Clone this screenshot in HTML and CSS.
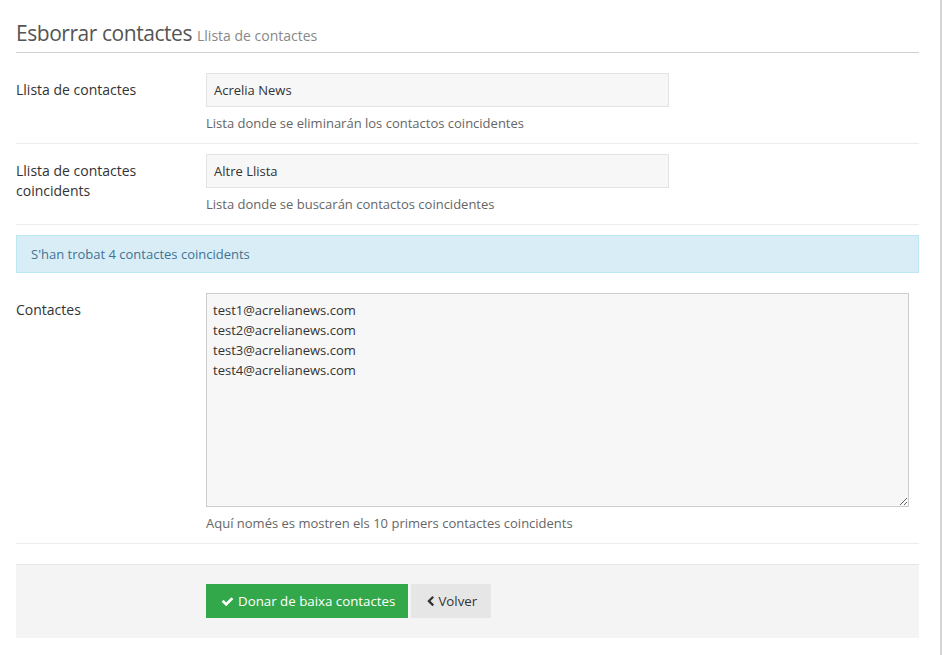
FILE: index.html
```html
<!DOCTYPE html>
<html lang="ca">
<head>
<meta charset="utf-8">
<title>Esborrar contactes</title>
<link rel="stylesheet" href="styles.css">
</head>
<body>
<div class="frame">
  <h1 class="page-title">Esborrar contactes <small>Llista de contactes</small></h1>
  <form class="form">
    <div class="row row-first">
      <label class="label">Llista de contactes</label>
      <div class="field">
        <div class="input input-half">Acrelia News</div>
        <p class="help">Lista donde se eliminarán los contactos coincidentes</p>
      </div>
    </div>
    <div class="row">
      <label class="label">Llista de contactes coincidents</label>
      <div class="field">
        <div class="input input-half">Altre Llista</div>
        <p class="help">Lista donde se buscarán contactos coincidentes</p>
      </div>
    </div>
    <div class="alert">S'han trobat 4 contactes coincidents</div>
    <div class="row">
      <label class="label">Contactes</label>
      <div class="field">
        <textarea class="textarea" readonly>test1@acrelianews.com
test2@acrelianews.com
test3@acrelianews.com
test4@acrelianews.com</textarea>
        <p class="help">Aquí només es mostren els 10 primers contactes coincidents</p>
      </div>
    </div>
    <div class="actions">
      <button type="button" class="btn btn-success"><svg class="ico" viewBox="0 0 1792 1792"><path fill="currentColor" d="M1671 566q0 40-28 68l-724 724-136 136q-28 28-68 28t-68-28l-136-136-362-362q-28-28-28-68t28-68l136-136q28-28 68-28t68 28l294 295 656-657q28-28 68-28t68 28l136 136q28 28 28 68z"/></svg>Donar de baixa contactes</button>
      <button type="button" class="btn btn-default"><svg class="ico ico-chev" viewBox="0 0 1792 1792"><path fill="currentColor" d="M1427 301l-531 531 531 531q19 19 19 45t-19 45l-166 166q-19 19-45 19t-45-19l-742-742q-19-19-19-45t19-45l742-742q19-19 45-19t45 19l166 166q19 19 19 45t-19 45z"/></svg>Volver</button>
    </div>
  </form>
</div>
</body>
</html>
```

FILE: styles.css
```css
* { box-sizing: border-box; }
html, body { margin: 0; padding: 0; background: #fff; }
body {
  font-family: "Open Sans", "Liberation Sans", sans-serif;
  font-size: 14px;
  color: #333;
}
.frame {
  width: 942px;
  min-height: 655px;
  padding: 0 21px 0 16px;
  border-right: 2px solid #d4d4d4;
}
.page-title {
  margin: 0;
  padding: 18px 0 1px;
  font-size: 21px;
  font-weight: 400;
  line-height: 31px;
  color: #555;
  border-bottom: 1px solid #cfcfcf;
  letter-spacing: -0.45px;
}
.page-title small {
  font-size: 14px;
  color: #888;
  letter-spacing: 0;
}
.form { margin: 0; }
.row {
  display: flex;
  padding: 10px 0 11px;
  border-bottom: 1px solid #ececec;
}
.row-first { padding-top: 20px; }
.label {
  width: 190px;
  flex: none;
  padding: 7px 30px 0 0;
  line-height: 20px;
  font-size: 14px;
  color: #333;
}
.field { flex: 1; padding-right: 10px; }
.input {
  height: 34px;
  padding: 7px 7px;
  border: 1px solid #e3e3e3;
  background: #f7f7f7;
  font-size: 13px;
  line-height: 18px;
  color: #333;
}
.input-half { width: 463px; }
.help {
  margin: 7px 0 0;
  font-size: 13px;
  line-height: 18px;
  color: #666;
}
.alert {
  margin: 10px 0 10px;
  padding: 9px 14px;
  border: 1px solid #bce8f1;
  background: #d9edf7;
  color: #3f7393;
  font-size: 13px;
  line-height: 18px;
}
.textarea {
  display: block;
  width: 100%;
  height: 214px;
  margin: 0;
  padding: 6px 6px;
  border: 1px solid #cdcdcd;
  background: #f7f7f7;
  font-family: inherit;
  font-size: 13px;
  line-height: 20px;
  color: #333;
  resize: vertical;
  border-radius: 0;
  outline: none;
}
.actions {
  margin-top: 20px;
  padding: 19px 0 20px 190px;
  background: #f4f4f4;
  border-top: 1px solid #e6e6e6;
  display: flex;
  gap: 3px;
}
.btn {
  height: 34px;
  border: 0;
  border-radius: 0;
  padding: 0 14px;
  font-family: inherit;
  font-size: 13.3px;
  line-height: 34px;
  display: inline-flex;
  align-items: center;
  cursor: pointer;
}
.btn-success { background: #33a84a; color: #fff; padding: 0 13px 0 15px; }
.btn-default { background: #e6e6e6; color: #333; padding: 0 14px 0 14px; }
.ico { width: 13px; height: 13px; margin-right: 4px; }
.ico-chev { width: 11px; height: 11px; margin-right: 2px; }
```
